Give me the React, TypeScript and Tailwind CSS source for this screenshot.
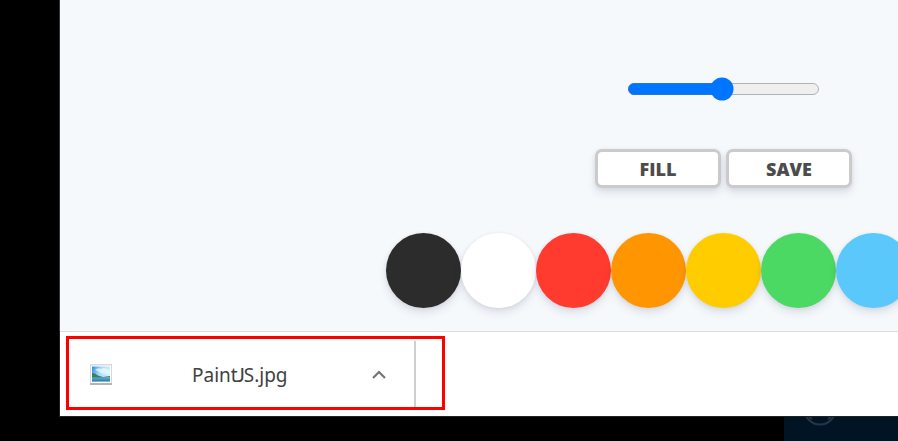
const colors = [
  'bg-[#2c2c2c]',
  'bg-white',
  'bg-[#ff3b30]',
  'bg-[#ff9500]',
  'bg-[#ffcc00]',
  'bg-[#4cd963]',
  'bg-[#5ac8fa]',
];

function RangeSlider() {
  return (
    <svg className="ml-[566px] mt-[76px] block h-[26px] w-[196px] shrink-0" viewBox="0 0 196 26">
      <rect x="2.5" y="7.5" width="190" height="11" rx="5.5" fill="#efefef" stroke="#b2b2b2" />
      <path d="M96 7.5H8a5.5 5.5 0 0 0 0 11h88z" fill="#0075ff" stroke="#1f70cf" strokeWidth="0.8" />
      <circle cx="96" cy="13" r="11.5" fill="#0075ff" />
    </svg>
  );
}

function ControlButton({ label }: { label: string }) {
  return (
    <button className="flex h-[39px] w-[126px] items-center justify-center rounded-[7px] border-[3px] border-[#cbcbcb] bg-white font-['Open_Sans','Noto_Sans',sans-serif] text-[18px] font-extrabold leading-none text-[#4c4c4c] shadow-[0_5px_8px_rgba(50,50,93,0.11),0_1px_4px_rgba(0,0,0,0.08)]">
      {label}
    </button>
  );
}

function ImageIcon() {
  return (
    <svg className="mt-[2px] block h-[22px] w-[24px] shrink-0" viewBox="0 0 24 22">
      <defs>
        <linearGradient id="sky" x1="0" y1="0" x2="1" y2="0.35">
          <stop offset="0" stopColor="#2b8edc" />
          <stop offset="0.5" stopColor="#a5dbf8" />
          <stop offset="1" stopColor="#d4f0fc" />
        </linearGradient>
        <linearGradient id="sea" x1="0" y1="0" x2="0" y2="1">
          <stop offset="0" stopColor="#6fb6c6" />
          <stop offset="1" stopColor="#2377b8" />
        </linearGradient>
      </defs>
      <rect x="1" y="0.5" width="22" height="20.5" fill="#b4b4b4" />
      <rect x="1" y="0.5" width="22" height="18.5" fill="#d9d9d9" />
      <rect x="2" y="1.5" width="20" height="17.5" fill="#fff" />
      <rect x="3" y="2.5" width="18" height="15" fill="url(#sky)" />
      <path d="M6 6q3-3 6-1 3-2 6 0l3 2v3q-6 1-9-1-3-2-6-3z" fill="#eafaff" opacity=".75" />
      <path d="M3 9l3 .5 3 2 5 1.5 7-1v2H3z" fill="#397f6c" />
      <path d="M3 13.5h8l10-.5v4.5H3z" fill="url(#sea)" />
    </svg>
  );
}

export default function App() {
  return (
    <div className="relative h-[441px] w-[898px] overflow-hidden bg-black font-['Noto_Sans','Open_Sans',sans-serif]">
      <main className="ml-[59px] flex h-[331px] flex-col overflow-hidden border-l border-[#333] bg-[#f5f9fc]">
        <RangeSlider />
        <div className="ml-[535px] mt-[47px] flex gap-[5px]">
          <ControlButton label="FILL" />
          <ControlButton label="SAVE" />
        </div>
        <div className="ml-[326px] mt-[45px] flex">
          {colors.map((color) => (
            <div
              key={color}
              className={`size-[75px] shrink-0 rounded-full shadow-[0_5px_8px_rgba(50,50,93,0.11),0_1px_4px_rgba(0,0,0,0.08)] ${color}`}
            />
          ))}
        </div>
      </main>
      <section className="ml-[59px] h-[86px] border-b border-l border-[#222] bg-white">
        <div className="h-[85px] border-t border-[#dadce0] pl-[6px] pt-[4px]">
          <div className="flex h-[74px] w-[379px] border-[3px] border-[#ff0000]">
            <div className="mt-[2px] flex h-[66px] w-[347px] items-center border-r-2 border-[#cfcfcf] pl-[20px]">
              <ImageIcon />
              <span className="ml-[79px] w-[94px] whitespace-nowrap pt-[2px] text-[19px] leading-none text-[#414141]">
                Paint<span className="-ml-[1px] font-['Lato','Noto_Sans',sans-serif] tracking-[-1px]">J</span>S.jpg
              </span>
              <svg className="ml-[85px] mt-px block h-[12px] w-[16px]" viewBox="0 0 16 12" fill="none">
                <path d="M2 9l6-6 6 6" stroke="#757575" strokeWidth="2.2" />
              </svg>
            </div>
          </div>
        </div>
      </section>
      <footer className="flex h-[24px] justify-end">
        <div className="h-[24px] w-[114px] bg-[#001424]">
          <svg className="block h-[24px] w-[114px]" viewBox="0 0 114 24" fill="none" stroke="#20364c" strokeWidth="2">
            <circle cx="36" cy="-8" r="15.5" />
            <path d="M25 0l3 2M47 0l-3 2" />
          </svg>
        </div>
      </footer>
    </div>
  );
}
